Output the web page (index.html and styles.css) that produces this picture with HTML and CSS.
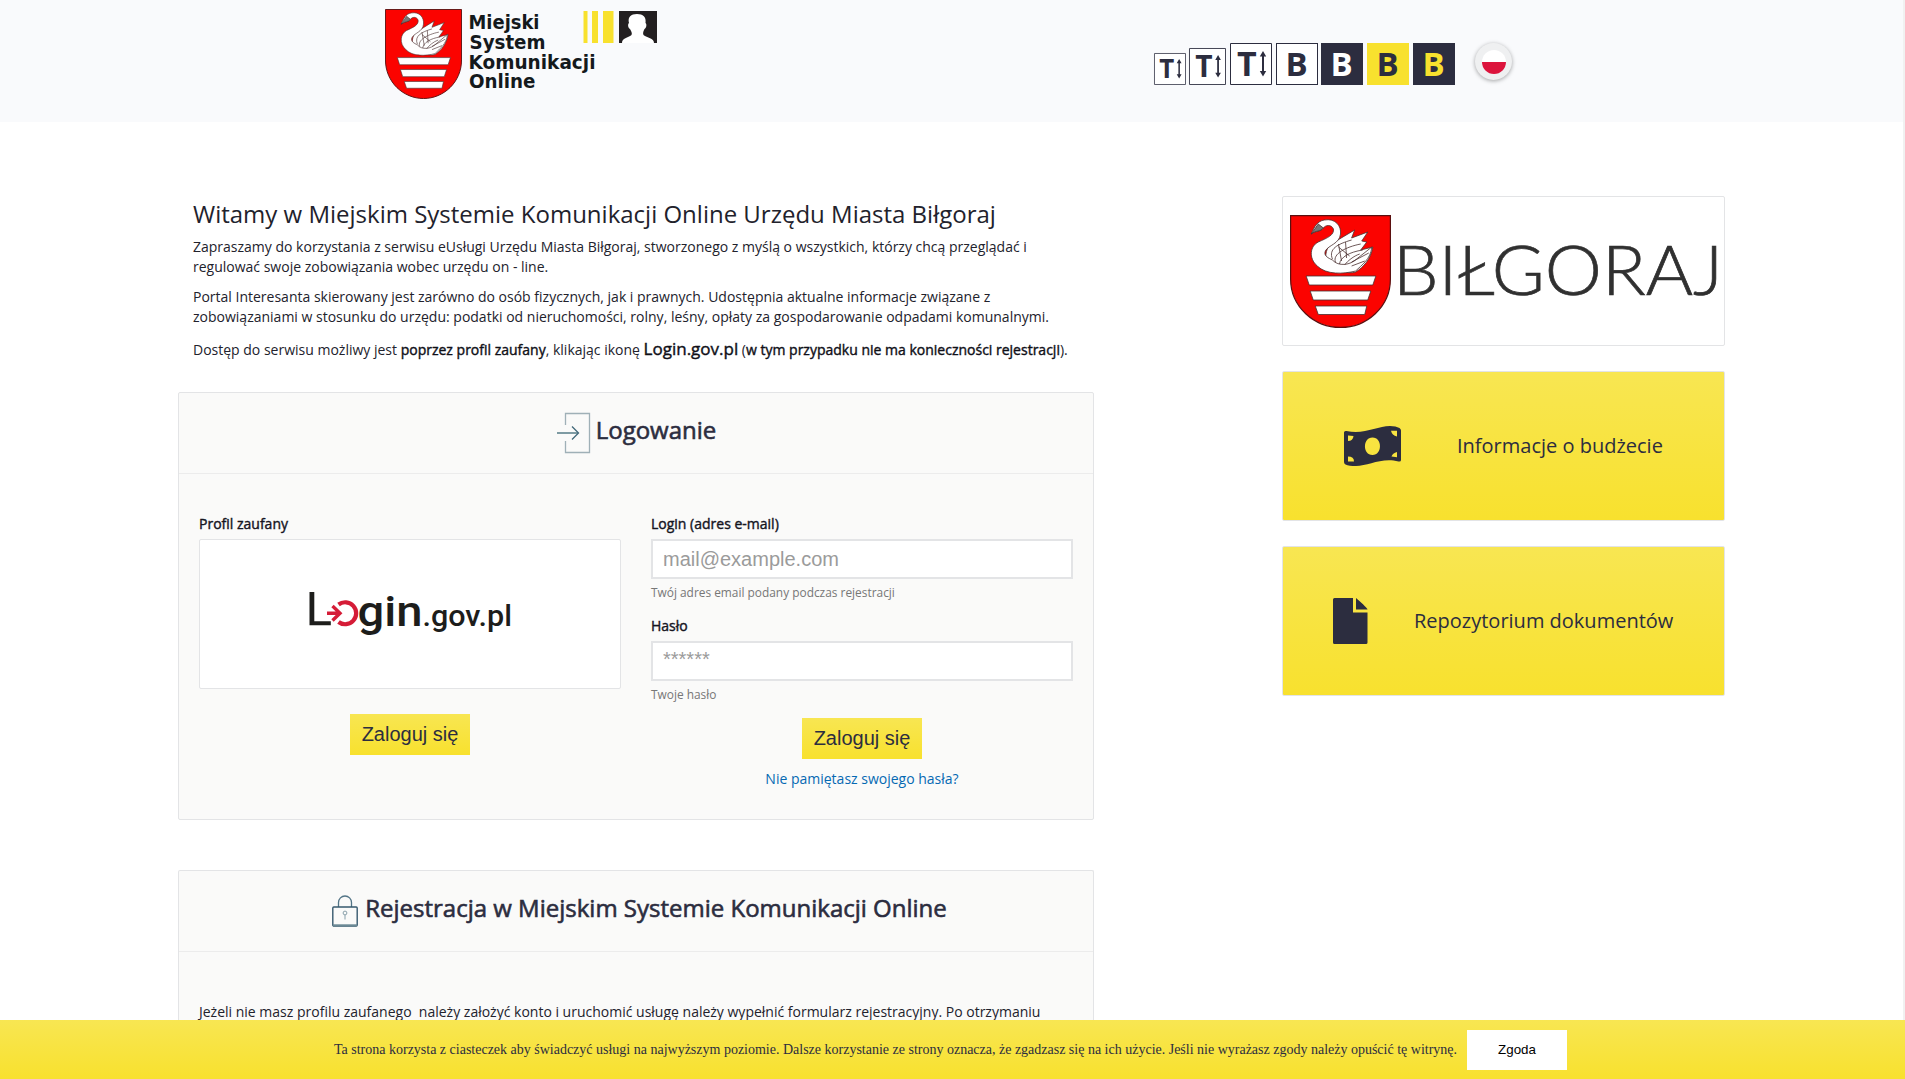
FILE: index.html
```
<!DOCTYPE html>
<html lang="pl">
<head>
<meta charset="utf-8">
<title>Miejski System Komunikacji Online</title>
<link rel="stylesheet" href="styles.css">
</head>
<body>
<svg class="defs" width="0" height="0">
  <symbol id="crest" viewBox="0 0 100 113" preserveAspectRatio="none">
    <path d="M.6.6H99.4V64C99.4 92 76 112.4 50 112.4S.6 92 .6 64Z" fill="#fb0300" stroke="#5a1010" stroke-width="1.2"/>
    <g stroke="#4a3030" stroke-width=".8" fill="#fff" stroke-linejoin="round">
      <path d="M36 46C34 36 38 30 44 27L64 15 61 23 77 17 71 26 76 27 70 35 82 32C80 44 73 52 65 57C57 60 44 54 36 46Z"/>
      <path d="M21 19C24 12 27 6 34 5C45 3 51 11 50 19C49 29 38 30 35 36C33 41 38 43 42 45C48 52 60 50 66 44L81 32C80 44 71 50 65 56C53 59 36 60 27 51C18 43 20 31 28 27C37 23 44 20 43 14C41 9 35 10 33 13C30 17 26 15 21 19Z"/>
      <path d="M21 19L28 9 33 13C30 17 26 15 21 19Z" fill="#777"/>
      <path d="M42 44C38 34 47 29 61 25M45 47C42 39 55 32 70 29M49 49C50 42 59 37 72 35M54 50C57 46 63 41 69 39M48 29l3 17M55 27l1 16M61 47l17-9M61 51l13-5M48 32l11 9" fill="none"/>
      <path d="M16 61H85L82 70H19ZM20 76H80L77 85H23ZM25 91H76L74 99.500H28Z"/>
    </g>
  </symbol>
</svg>

<header class="top">
  <a class="brand" href="#">
    <svg width="280" height="96" viewBox="380 5 280 96">
      <use href="#crest" x="385" y="9" width="77" height="90"/>
      <g class="brand-text">
        <text x="468.500" y="28.500" textLength="71" lengthAdjust="spacingAndGlyphs">Miejski</text>
        <text x="469.500" y="49" textLength="76" lengthAdjust="spacingAndGlyphs">System</text>
        <text x="468.500" y="69" textLength="127" lengthAdjust="spacingAndGlyphs">Komunikacji</text>
        <text x="469" y="88" textLength="66.500" lengthAdjust="spacingAndGlyphs">Online</text>
      </g>
      <path d="M583.500 11h4v32h-4zM592 11h6v32h-6zM603 11h10.500v32H603z" fill="#f8e12e"/>
      <path d="M619 11h38v32h-38z" fill="#231f20"/>
      <path d="M622 43C622 38 628 38 631.500 35C632.500 33 631 31 630 29C628 28 627.500 24 629 23C627.500 17 631 14 637 14S646.500 17 645.500 23C647 24 646.500 28 644.500 29C643.500 31 642.500 33 643.500 35C647 38 654 38 654 43Z" fill="#fff"/>
    </svg>
  </a>
  <nav class="tools">
    <svg width="32" height="32" viewBox="0 0 42 42"><path class="frame" d="M.65.65h40.700v40.700H.65z"/><use href="#tsize"/></svg>
    <svg width="37" height="37" viewBox="0 0 42 42"><path class="frame" d="M.55.55h40.900v40.900H.55z"/><use href="#tsize"/></svg>
    <svg width="42" height="42" viewBox="0 0 42 42">
      <g id="tsize"><text class="glyph" x="7" y="32.500">T</text><path d="M33 11v19" stroke="#2c2d3f" stroke-width="2"/><path d="M33 8l3.200 5.500h-6.400zM33 33.500l3.200-5.500h-6.400z" fill="#2c2d3f"/></g>
      <path class="frame" d="M.5.5h41v41H.5z"/>
    </svg>
    <span class="tone tone-light">B</span>
    <span class="tone tone-dark">B</span>
    <span class="tone tone-yellow">B</span>
    <span class="tone tone-night">B</span>
    <span class="flag"><i></i></span>
  </nav>
</header>

<div class="page">
  <main>
    <section class="intro">
      <h1><span>Witamy w Miejskim Systemie Komunikacji Online Urzędu Miasta Biłgoraj</span></h1>
      <p>Zapraszamy do korzystania z serwisu eUsługi Urzędu Miasta Biłgoraj, stworzonego z myślą o wszystkich, którzy chcą przeglądać i<br>regulować swoje zobowiązania wobec urzędu on - line.</p>
      <p>Portal Interesanta skierowany jest zarówno do osób fizycznych, jak i prawnych. Udostępnia aktualne informacje związane z<br>zobowiązaniami w stosunku do urzędu: podatki od nieruchomości, rolny, leśny, opłaty za gospodarowanie odpadami komunalnymi.</p>
      <p class="access">Dostęp do serwisu możliwy jest <b>poprzez profil zaufany</b>, klikając ikonę <b class="big">Login.gov.pl</b> (<b>w tym przypadku nie ma konieczności rejestracji</b>).</p>
    </section>

    <section class="panel login">
      <h2>
        <svg width="34" height="42" viewBox="0 0 34 42"><path d="M8.500 13V1.500h24v39h-24V29" fill="none" stroke="#9fb0b7" stroke-width="1.300"/><path d="M0 21h21" stroke="#5f848e" stroke-width="1.600"/><path d="M15 14.500l6.500 6.500-6.500 6.500" fill="none" stroke="#41687a" stroke-width="1.300"/></svg>
        <span>Logowanie</span>
      </h2>
      <div class="columns">
        <div class="col">
          <label>Profil zaufany</label>
          <div class="trusted">
            <svg width="210" height="64" viewBox="305 583 210 64">
              <g fill="#1d1d1b" class="gov">
                <path d="M309.500 593h4.800v29.300h16.500v4h-21.300z"/>
                <text x="357.500" y="626.500" font-size="43" textLength="65" lengthAdjust="spacingAndGlyphs">gin</text>
                <text x="422.500" y="626.500" font-size="29" textLength="89.500" lengthAdjust="spacingAndGlyphs">.gov.pl</text>
              </g>
              <path d="M338.500 605.500a11 11 0 1 1 0 17.500" fill="none" stroke="#d51c37" stroke-width="4.200"/>
              <path d="M327 614.200h12M332.500 607l7.500 7.200-7.500 7.200" fill="none" stroke="#d51c37" stroke-width="3.400"/>
            </svg>
          </div>
          <button class="btn btn-left">Zaloguj się</button>
        </div>
        <div class="col">
          <label>Login (adres e-mail)</label>
          <input type="text" placeholder="mail@example.com">
          <small>Twój adres email podany podczas rejestracji</small>
          <label>Hasło</label>
          <input class="password" type="password" placeholder="******">
          <small>Twoje hasło</small>
          <button class="btn btn-right">Zaloguj się</button>
          <a class="forgot" href="#">Nie pamiętasz swojego hasła?</a>
        </div>
      </div>
    </section>

    <section class="panel register">
      <h2>
        <svg width="26" height="32" viewBox="0 0 26 32"><path d="M6.500 12V7.500a6.500 6.500 0 0 1 13 0V12" fill="none" stroke="#527486" stroke-width="1.300"/><rect x=".8" y="12" width="24.400" height="19" rx="1" fill="none" stroke="#37596e" stroke-width="1.400"/><path d="M1 30.300h24" stroke="#6b8995" stroke-width="2"/><path d="M13 20v4.500" stroke="#8aa1ab"/><circle cx="13" cy="18" r="1.900" fill="none" stroke="#8aa1ab"/></svg>
        <span>Rejestracja w Miejskim Systemie Komunikacji Online</span>
      </h2>
      <p>Jeżeli nie masz profilu zaufanego &nbsp;należy założyć konto i uruchomić usługę należy wypełnić formularz rejestracyjny. Po otrzymaniu</p>
    </section>
  </main>

  <aside>
    <a class="tile tile-city" href="#">
      <svg width="441" height="148" viewBox="1283 197 441 148">
        <use href="#crest" x="1290" y="215" width="101" height="113"/>
        <text class="city" x="1393" y="294.500" textLength="330" lengthAdjust="spacingAndGlyphs">BIŁGORAJ</text>
      </svg>
    </a>
    <a class="tile tile-link" href="#">
      <svg width="57" height="40" viewBox="0 0 57 40"><path fill="#2c2d3f" fill-rule="evenodd" d="M0 6.500Q0 4.500 2.500 5C20 9 33 0 46 0Q52 0 55.500 2Q57 3 57 4.500V34Q57 36 54.500 35.500C38 31 24 40 12 40Q5 40 1.500 38.500Q0 37.500 0 36ZM4 9.500V15Q9 15 9.500 10ZM4 35.500H10Q10 30.500 4 30.500ZM53 4.800H47Q48 9.500 53 10.500ZM53 31.200V26Q48.500 27 47.500 30.500ZM28.500 11.500C18.500 11.500 18.500 29 28.500 29S38.500 11.500 28.500 11.500Z"/></svg>
      <span>Informacje o budżecie</span>
    </a>
    <a class="tile tile-link tile-docs" href="#">
      <svg width="35" height="46" viewBox="0 0 35 46"><path fill="#2c2d3f" d="M1.500 0H20V14.500H34.500V44.500Q34.500 46 33 46H1.500Q0 46 0 44.500V1.500Q0 0 1.500 0ZM23 0Q34.500 10 34.500 11.500H23Z"/></svg>
      <span>Repozytorium dokumentów</span>
    </a>
  </aside>
</div>

<div class="cookies">
  <span>Ta strona korzysta z ciasteczek aby świadczyć usługi na najwyższym poziomie. Dalsze korzystanie ze strony oznacza, że zgadzasz się na ich użycie. Jeśli nie wyrażasz zgody należy opuścić tę witrynę.</span>
  <button>Zgoda</button>
</div>
</body>
</html>
```
FILE: styles.css
```
* { box-sizing: border-box; }
body { margin: 0; height: 1079px; overflow: hidden; background: #fff; border-right: 2px solid #f1f1f1; color: #22222c; font: 400 14px/20px "Open Sans", sans-serif; }
.defs { position: absolute; }
svg { overflow: visible; }
a { text-decoration: none; }

.top { display: flex; align-items: flex-start; height: 122px; padding: 5px 0 0 380px; background: #f9fafc; }
.brand { width: 280px; height: 96px; }
.brand-text { font: bold 19px "DejaVu Sans", sans-serif; fill: #14191c; }
.tools { display: flex; align-items: flex-end; margin-left: 494px; height: 80px; }
.tools > svg { margin-right: 4px; background: #fff; }
.tools > svg:first-child { margin-right: 3px; }
.frame { fill: none; stroke: #2c2d3f; stroke-width: 1; }
.glyph { font: bold 34px "Open Sans", sans-serif; fill: #2c2d3f; }
.tone { width: 42px; height: 42px; margin-right: 4px; font: bold 33px/41px "Open Sans", sans-serif; text-align: center; text-indent: -1px; color: #2c2d3f; }
.tone-light { border: 1px solid #2c2d3f; background: #fff; margin-right: 3px; line-height: 39px; }
.tone-dark { background: #2c2d3f; color: #fff; }
.tone-yellow { background: #f8e12e; }
.tone-night { background: #2c2d3f; color: #f8e12e; }
.flag { display: flex; align-items: center; justify-content: center; width: 37px; height: 37px; margin: 0 0 5px 16px; border-radius: 50%; background: #eff0f1; box-shadow: 0 1px 4px rgba(0,0,0,.35); }
.flag i { width: 24px; height: 24px; border-radius: 50%; background: linear-gradient(#fff 50%, #dc143c 50%); }

.page { display: flex; justify-content: space-between; padding: 74px 178px 0; }
main { width: 916px; }
.intro { height: 196px; padding: 5px 15px 0; white-space: nowrap; }
h1, h2 { margin: 0; font-weight: 400; }
h1 { font-size: 24px; line-height: 26px; margin-bottom: 10px; }
p { margin: 0 0 10px; }
b, label, h2 span { font-weight: 400; -webkit-text-stroke: .4px currentColor; }
b { color: #101018; }
.access { padding-top: 2px; }
.big { font-size: 17px; }

.panel { border: 1px solid #e3e4e6; border-radius: 2px; background: #fafaf9; }
.login { height: 428px; }
.register { height: 209px; margin-top: 50px; border-bottom: 0; }
h2 { display: flex; align-items: center; justify-content: center; gap: 5px; height: 81px; padding-left: 1px; border-bottom: 1px solid #ececec; color: #2c2d3f; font-size: 24px; line-height: 26px; }
h2 span { margin-top: -6px; -webkit-text-stroke-width: .6px; }
.register h2 { gap: 7px; padding-left: 7px; }
.register h2 svg { margin-top: 0; }
.register p { margin: 0; padding: 50px 20px 0; white-space: nowrap; }
.columns { display: flex; gap: 30px; padding: 40px 20px 0; }
.col { width: 422px; display: flex; flex-direction: column; }
label { margin-bottom: 5px; color: #15151f; }
.trusted { display: flex; align-items: center; height: 150px; padding-left: 105px; border: 1px solid #e3e4e6; border-radius: 2px; background: #fff; }
.gov { font-family: Roboto, sans-serif; font-weight: 500; }
.btn { width: 120px; height: 41px; align-self: center; padding: 0; border: 0; background: linear-gradient(#f8e652, #f8e12e); color: #2c2d3f; font: 20px "Liberation Sans", sans-serif; }
.btn-left { margin-top: 25px; }
.btn-right { margin-top: 1px; }
input { height: 40px; padding: 0 10px; border: 2px solid #e3e4e6; background: #fff; font: 20px "Liberation Sans", sans-serif; }
.password { padding-bottom: 3px; }
input::placeholder { color: #9b9b9b; opacity: 1; }
small { height: 20px; margin: 3px 0 14px; color: #777; font-size: 11.900px; }
small:last-of-type { margin-bottom: 13px; }
.forgot { align-self: center; margin-top: 10px; color: #0569b3; }

aside { display: flex; flex-direction: column; gap: 25px; width: 443px; }
.tile { display: flex; align-items: center; height: 150px; border: 1px solid #e3e4e6; border-radius: 2px; color: #2c2d3f; font-size: 20px; }
.city { font: 300 69px Lato, sans-serif; fill: #303030; stroke: #303030; stroke-width: .7; }
.tile-link { gap: 56px; padding-left: 61px; background: linear-gradient(#f8e652, #f8e12e); white-space: nowrap; }
.tile-docs { gap: 46px; padding-left: 50px; }

.cookies { position: fixed; left: 0; right: 0; bottom: 0; display: flex; align-items: center; height: 59px; padding-left: 334px; gap: 10px; background: linear-gradient(#f8e652, #f8e12e); color: #2c2d3f; font: 14px "Liberation Serif", serif; letter-spacing: -.003px; white-space: nowrap; }
.cookies button { width: 100px; height: 40px; padding: 0; border: 0; background: #fff; color: #000; font: 13.333px "Liberation Sans", sans-serif; }
```
